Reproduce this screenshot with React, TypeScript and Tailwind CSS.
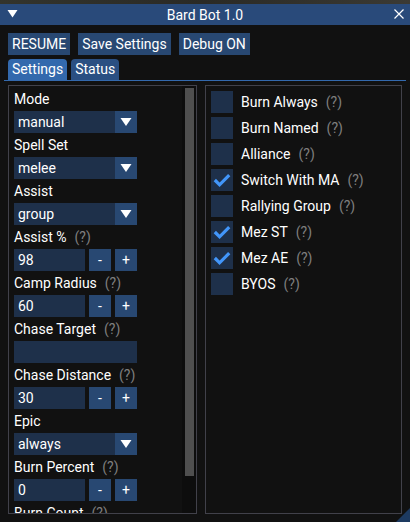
import React from "react";

const Help = () => <span className="ml-[8px] text-[#7f7f7f]">(?)</span>;

const DownArrow = () => (
  <svg width="22" height="22" viewBox="0 0 22 22">
    <polygon points="5.5,7 16.5,7 11,15" fill="#ffffff" />
  </svg>
);

const Label = ({ text, help }: { text: string; help?: boolean }) => (
  <div className="h-[16px] shrink-0 leading-[16px] whitespace-nowrap">
    {text}
    {help && <Help />}
  </div>
);

const Combo = ({ value }: { value: string }) => (
  <div className="flex h-[22px] w-[123px] shrink-0">
    <div className="flex flex-1 items-center bg-[#1e304a] pl-[4px]">{value}</div>
    <div className="flex w-[22px] items-center justify-center bg-[#284872]">
      <DownArrow />
    </div>
  </div>
);

const Stepper = ({ value }: { value: string }) => (
  <div className="flex h-[22px] w-[123px] shrink-0 gap-[4px]">
    <div className="flex w-[71px] items-center bg-[#1e304a] pl-[4px]">{value}</div>
    <div className="flex w-[22px] items-center justify-center bg-[#284872]">-</div>
    <div className="flex w-[22px] items-center justify-center bg-[#284872]">+</div>
  </div>
);

const Check = ({ label, checked }: { label: string; checked?: boolean }) => (
  <div className="flex h-[22px] shrink-0 items-center gap-[8px] whitespace-nowrap">
    <div className="h-[22px] w-[22px] bg-[#1e304a]">
      {checked && (
        <svg width="22" height="22" viewBox="0 0 22 22">
          <polyline
            points="3.8,11 8.6,15.8 18.2,6.2"
            fill="none"
            stroke="#4296fa"
            strokeWidth="3.2"
          />
        </svg>
      )}
    </div>
    <span>
      {label}
      <Help />
    </span>
  </div>
);

export default function App() {
  const checks = [
    { label: "Burn Always" },
    { label: "Burn Named" },
    { label: "Alliance" },
    { label: "Switch With MA", checked: true },
    { label: "Rallying Group" },
    { label: "Mez ST", checked: true },
    { label: "Mez AE", checked: true },
    { label: "BYOS" },
  ];

  return (
    <div className="relative h-[522px] w-[410px] overflow-hidden bg-[#111111] font-['Roboto',sans-serif] text-[14px] text-white">
      {/* game background peeking above the window */}
      <div className="h-[4px] bg-gradient-to-r from-[#33342c] via-[#2a2a26] to-[#3b3a34]" />

      {/* title bar */}
      <div className="grid h-[21px] grid-cols-[1fr_auto_1fr] items-center bg-[#294a7a]">
        <div className="pl-[7px]">
          <svg width="11" height="21" viewBox="0 0 11 21" className="block">
            <polygon points="0.5,6 10.5,6 5.5,13.5" fill="#ffffff" />
          </svg>
        </div>
        <div className="leading-[16px]">Bard Bot 1.0</div>
        <div className="flex justify-end pr-[6px]">
          <svg width="10" height="21" viewBox="0 0 10 21" className="block">
            <path d="M0.5 5.5 L9.5 14.5 M9.5 5.5 L0.5 14.5" stroke="#ffffff" strokeWidth="1.2" />
          </svg>
        </div>
      </div>

      <div className="pt-[8px]">
        {/* action buttons */}
        <div className="flex gap-[8px] px-[8px]">
          {["RESUME", "Save Settings", "Debug ON"].map((b) => (
            <div key={b} className="flex h-[22px] items-center bg-[#284872] px-[4px] whitespace-nowrap">
              {b}
            </div>
          ))}
        </div>

        {/* tabs */}
        <div className="mt-[4px] flex h-[21px] gap-[4px] px-[8px]">
          <div className="flex items-center rounded-t-[4px] bg-[#3369ad] px-[4px]">Settings</div>
          <div className="flex items-center rounded-t-[4px] bg-[#2a4f82] px-[4px]">Status</div>
        </div>
        <div className="mx-[4px] h-[1px] bg-[#3369ad]" />

        {/* panels */}
        <div className="mt-[4px] flex gap-[8px] px-[8px]">
          <div className="flex h-[429px] w-[190px] overflow-hidden border border-[#41414a]">
            <div className="flex flex-1 flex-col gap-[4px] pl-[5px] pt-[5px]">
              <Label text="Mode" />
              <Combo value="manual" />
              <Label text="Spell Set" />
              <Combo value="melee" />
              <Label text="Assist" />
              <Combo value="group" />
              <Label text="Assist %" help />
              <Stepper value="98" />
              <Label text="Camp Radius" help />
              <Stepper value="60" />
              <Label text="Chase Target" help />
              <div className="h-[22px] w-[123px] shrink-0 bg-[#1e304a]" />
              <Label text="Chase Distance" help />
              <Stepper value="30" />
              <Label text="Epic" />
              <Combo value="always" />
              <Label text="Burn Percent" help />
              <Stepper value="0" />
              <Label text="Burn Count" help />
            </div>
            <div className="w-[14px] shrink-0 bg-[#0d0d0d] pl-[3px] pt-[2px]">
              <div className="h-[388px] w-[9px] bg-[#4f4f4f]" />
            </div>
          </div>

          <div className="h-[429px] w-[198px] border border-[#41414a]">
            <div className="flex flex-col gap-[4px] pl-[5px] pt-[5px]">
              {checks.map((c) => (
                <Check key={c.label} label={c.label} checked={c.checked} />
              ))}
            </div>
          </div>
        </div>
      </div>

      {/* resize grip */}
      <svg className="absolute bottom-0 right-0" width="14" height="14" viewBox="0 0 14 14">
        <polygon points="14,0 14,14 0,14" fill="#1d3a60" />
      </svg>
    </div>
  );
}
